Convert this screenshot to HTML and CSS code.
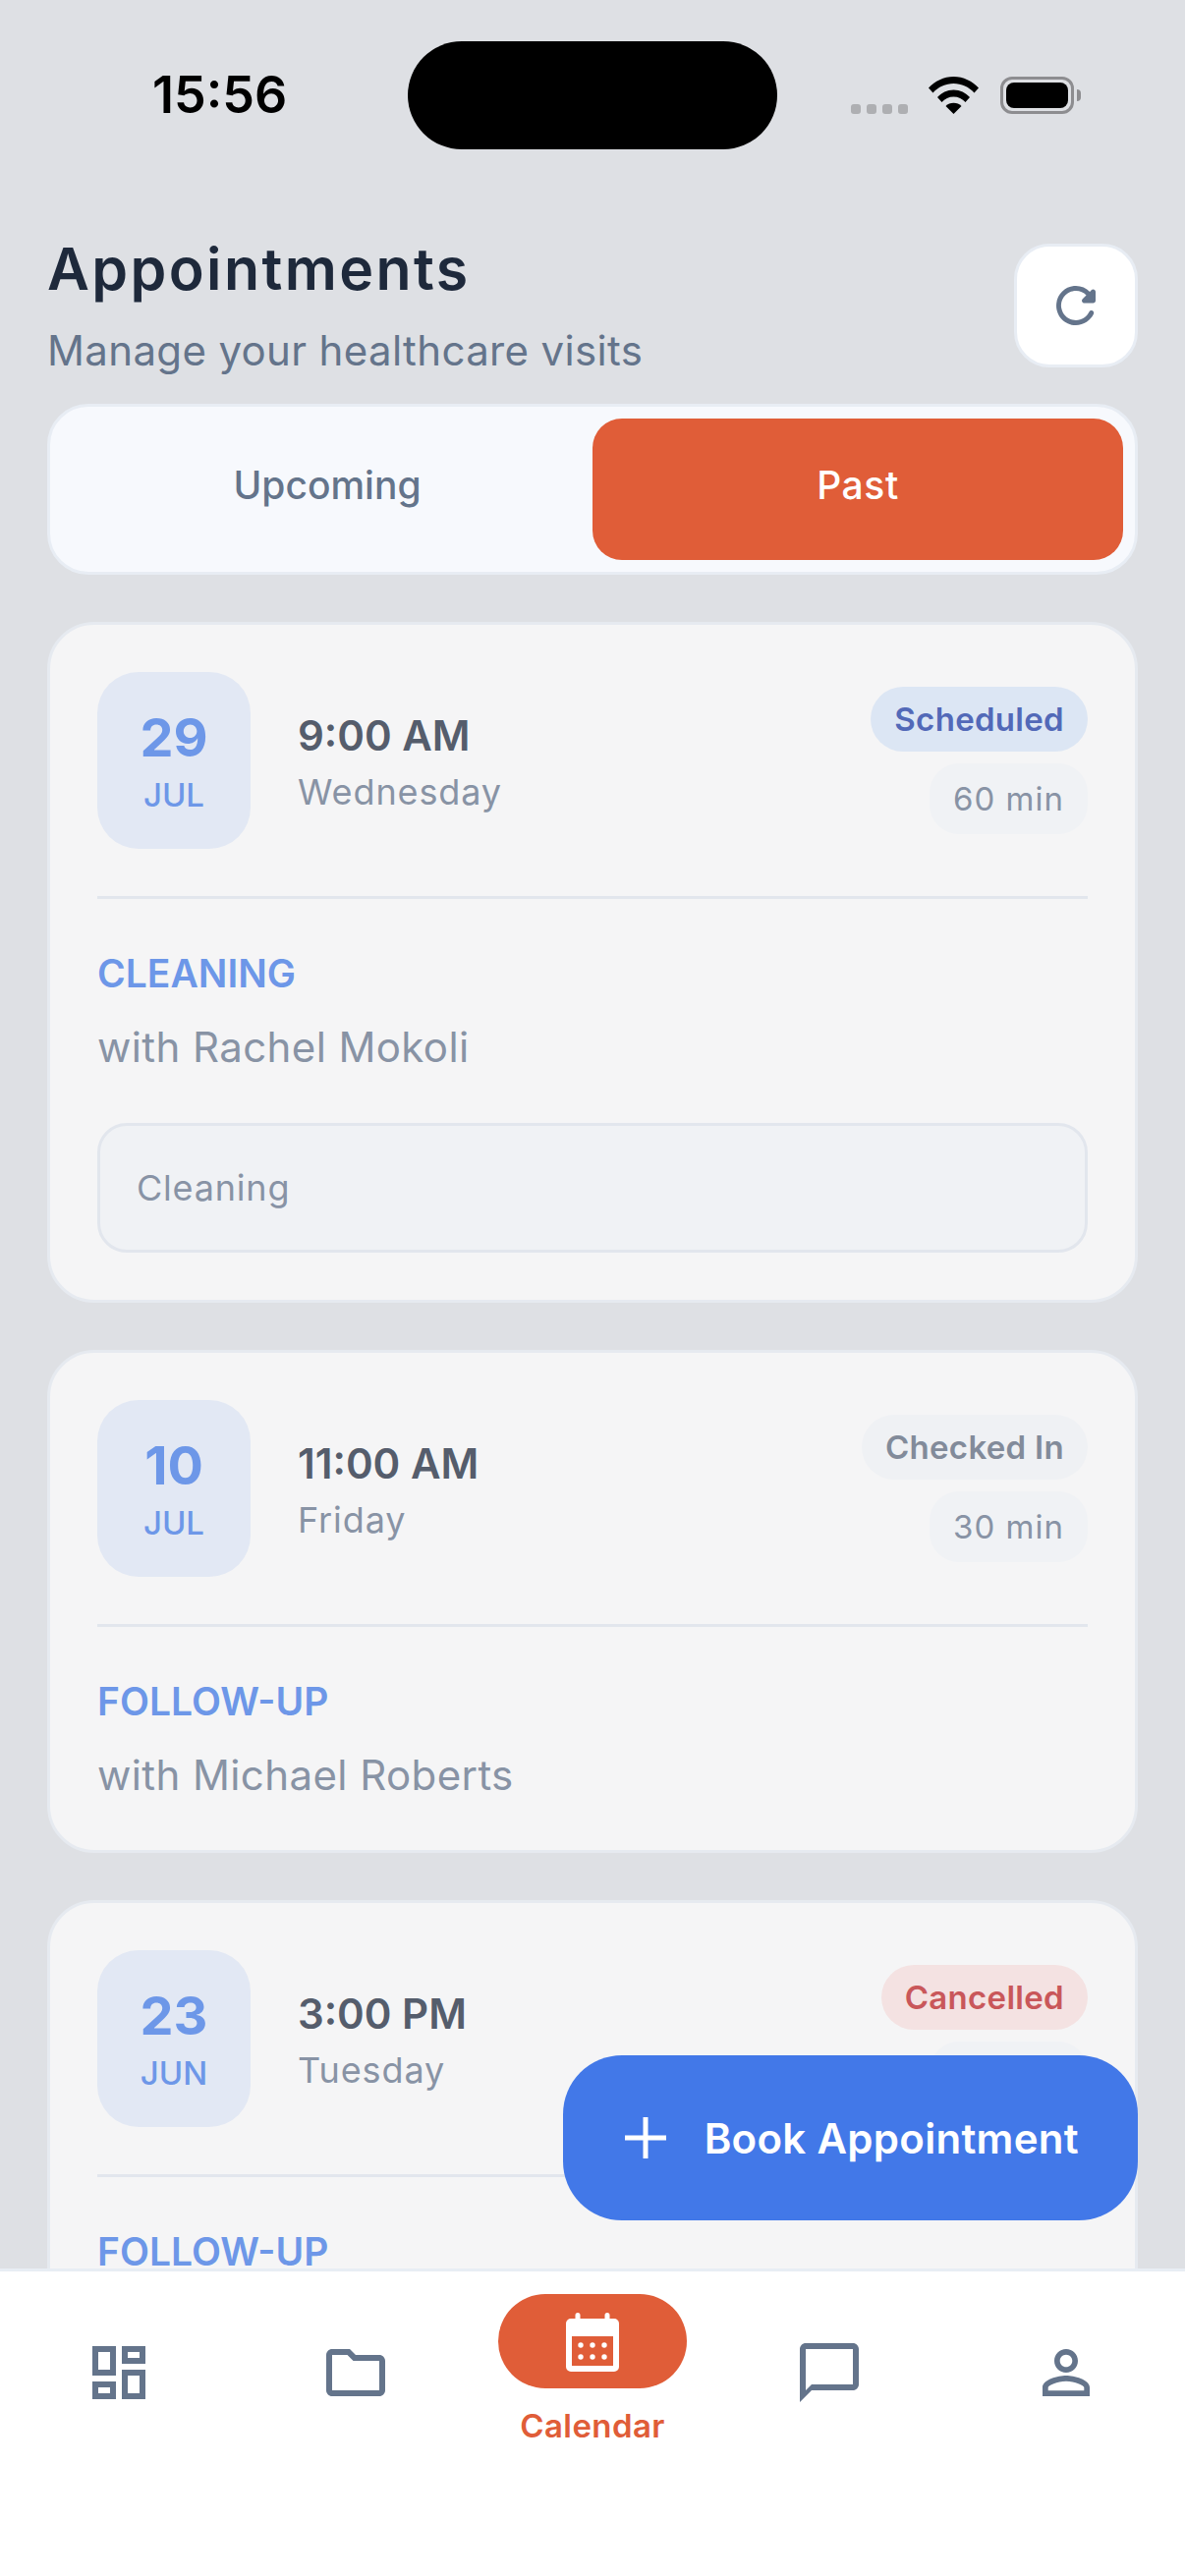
FILE: index.html
```html
<!DOCTYPE html>
<html lang="en">
<head>
<meta charset="utf-8">
<title>Appointments</title>
<link rel="stylesheet" href="styles.css">
</head>
<body>
<div class="phone">
  <div class="status-bar">
    <span class="time">15:56</span>
    <div class="island"></div>
    <div class="status-icons">
      <div class="signal"><i></i><i></i><i></i><i></i></div>
      <svg class="wifi" width="51" height="38" viewBox="0 0 51 38"><path d="M0 11.5C6.5 4.5 15.5 0 25.5 0S44.500 4.500 51 11.500L46.500 16.500C41 10.500 33.500 7 25.500 7S10 10.500 4.500 16.500Z"/><path d="M9 21C13 16.500 19 13.500 25.500 13.500S38 16.500 42 21L37.500 26C34.500 22.500 30.200 20.500 25.500 20.500S16.500 22.500 13.500 26Z"/><path d="M17.500 30C19.500 28 22.300 26.800 25.500 26.800S31.500 28 33.500 30L25.500 38Z"/></svg>
      <div class="battery"><div class="battery-fill"></div><div class="battery-cap"></div></div>
    </div>
  </div>

  <header class="page-header">
    <div class="heading">
      <h1 class="title">Appointments</h1>
      <p class="subtitle">Manage your healthcare visits</p>
    </div>
    <button class="refresh" type="button" aria-label="Refresh">
      <svg width="60" height="60" viewBox="0 0 24 24"><path fill="#64748b" d="M17.65 6.35c-1.63-1.63-3.94-2.57-6.48-2.31-3.67.37-6.69 3.35-7.1 7.02C3.52 15.91 7.27 20 12 20c3.19 0 5.93-1.87 7.21-4.56.32-.67-.16-1.44-.9-1.44-.37 0-.72.2-.88.53-1.130 2.430-3.840 3.970-6.800 3.310-2.220-.49-4.010-2.300-4.480-4.520C5.310 9.440 8.260 6 12 6c1.660 0 3.140.69 4.220 1.780l-1.510 1.510c-.63.63-.19 1.710.7 1.710H19c.55 0 1-.45 1-1V6.410c0-.89-1.080-1.340-1.710-.71l-.64.65z"/></svg>
    </button>
  </header>

  <div class="tabs">
    <div class="tab">Upcoming</div>
    <div class="tab tab-active">Past</div>
  </div>

  <main class="list">
    <article class="card">
      <div class="card-top">
        <div class="date"><span class="day">29</span><span class="month">JUL</span></div>
        <div class="when"><span class="hour">9:00 AM</span><span class="weekday">Wednesday</span></div>
        <div class="meta"><span class="badge badge-scheduled">Scheduled</span><span class="duration">60 min</span></div>
      </div>
      <div class="card-body">
        <div class="kind">CLEANING</div>
        <div class="provider">with Rachel Mokoli</div>
        <div class="note">Cleaning</div>
      </div>
    </article>

    <article class="card">
      <div class="card-top">
        <div class="date"><span class="day">10</span><span class="month">JUL</span></div>
        <div class="when"><span class="hour">11:00 AM</span><span class="weekday">Friday</span></div>
        <div class="meta"><span class="badge badge-checked">Checked In</span><span class="duration">30 min</span></div>
      </div>
      <div class="card-body">
        <div class="kind">FOLLOW-UP</div>
        <div class="provider">with Michael Roberts</div>
      </div>
    </article>

    <article class="card">
      <div class="card-top">
        <div class="date"><span class="day">23</span><span class="month">JUN</span></div>
        <div class="when"><span class="hour">3:00 PM</span><span class="weekday">Tuesday</span></div>
        <div class="meta"><span class="badge badge-cancelled">Cancelled</span><span class="duration">45 min</span></div>
      </div>
      <div class="card-body">
        <div class="kind">FOLLOW-UP</div>
      </div>
    </article>
  </main>

  <button class="fab" type="button">
    <svg width="48" height="48" viewBox="0 0 48 48"><path d="M24 3V45M3 24H45" stroke="#fff" stroke-width="5" fill="none"/></svg>
    <span>Book Appointment</span>
  </button>

  <nav class="nav">
    <div class="nav-item">
      <svg width="72" height="72" viewBox="0 0 24 24"><path fill="#64748b" d="M19 5v2h-4V5h4M9 5v6H5V5h4m10 8v6h-4v-6h4M9 17v2H5v-2h4M21 3h-8v6h8V3zM11 3H3v10h8V3zm10 8h-8v10h8V11zm-10 4H3v6h8v-6z"/></svg>
    </div>
    <div class="nav-item">
      <svg width="72" height="72" viewBox="0 0 24 24"><path fill="#64748b" d="M9.170 6l2 2H20v10H4V6h5.170M10 4H4c-1.100 0-1.990.9-1.990 2L2 18c0 1.100.9 2 2 2h16c1.100 0 2-.9 2-2V8c0-1.100-.9-2-2-2h-8l-2-2z"/></svg>
    </div>
    <div class="nav-item nav-item-active">
      <div class="nav-pill">
        <svg width="72" height="72" viewBox="0 0 72 72"><path fill="#fff" fill-rule="evenodd" d="M18.500 9.500a2.500 2.500 0 0 1 5 0V13h25V9.500a2.500 2.500 0 0 1 5 0V13H58a5 5 0 0 1 5 5v44a5 5 0 0 1-5 5H14a5 5 0 0 1-5-5V18a5 5 0 0 1 5-5h4.500ZM15 31V61H57V31Z"/><g fill="#fff"><circle cx="24" cy="40" r="2.700"/><circle cx="36" cy="40" r="2.700"/><circle cx="48" cy="40" r="2.700"/><circle cx="24" cy="52" r="2.700"/><circle cx="36" cy="52" r="2.700"/><circle cx="48" cy="52" r="2.700"/></g></svg>
      </div>
      <span class="nav-label">Calendar</span>
    </div>
    <div class="nav-item">
      <svg width="72" height="72" viewBox="0 0 24 24"><path fill="#64748b" d="M20 2H4c-1.100 0-2 .9-2 2v18l4-4h14c1.100 0 2-.9 2-2V4c0-1.100-.9-2-2-2zm0 14H6l-2 2V4h16v12z"/></svg>
    </div>
    <div class="nav-item">
      <svg width="72" height="72" viewBox="0 0 24 24"><path fill="#64748b" d="M12 5.900c1.160 0 2.100.94 2.100 2.100s-.94 2.100-2.100 2.100S9.900 9.160 9.900 8s.94-2.100 2.100-2.100m0 9c2.970 0 6.100 1.460 6.100 2.100v1.100H5.900V17c0-.64 3.130-2.100 6.100-2.100M12 4C9.790 4 8 5.790 8 8s1.790 4 4 4 4-1.790 4-4-1.790-4-4-4zm0 9c-2.670 0-8 1.340-8 4v3h16v-3c0-2.660-5.330-4-8-4z"/></svg>
    </div>
  </nav>
</div>
</body>
</html>
```

FILE: styles.css
```css
* { box-sizing: border-box; }
html, body { margin: 0; padding: 0; }
body { font-family: "Inter", "Liberation Sans", sans-serif; }

.phone {
  position: relative;
  width: 1206px;
  height: 2622px;
  background: #dee0e4;
  display: flex;
  flex-direction: column;
  overflow: hidden;
}

/* Status bar */
.status-bar {
  flex: none;
  height: 238px;
  display: flex;
  align-items: flex-start;
  padding: 42px 113px 0 155px;
}
.time {
  width: 260px;
  font-size: 52px;
  line-height: 110px;
  font-weight: 600;
  color: #000;
}
.island {
  width: 376px;
  height: 110px;
  border-radius: 55px;
  background: #000;
}
.status-icons {
  flex: 1;
  display: flex;
  align-items: flex-start;
  justify-content: flex-end;
  padding-top: 36px;
  position: relative;
}
.signal {
  display: flex;
  gap: 6px;
  margin-top: 28px;
  margin-right: 21px;
}
.signal i {
  width: 10px;
  height: 10px;
  border-radius: 3px;
  background: #aeafb2;
}
.wifi { margin-right: 22px; }
.battery {
  position: relative;
  width: 75px;
  height: 38px;
  border: 3px solid #8d8d90;
  border-radius: 12px;
  padding: 3px;
}
.battery-fill {
  width: 100%;
  height: 100%;
  border-radius: 8px;
  background: #000;
}
.battery-cap {
  position: absolute;
  right: -10px;
  top: 10px;
  width: 4px;
  height: 12px;
  background: #8d8d90;
  border-radius: 0 6px 6px 0;
}

/* Header */
.page-header {
  flex: none;
  display: flex;
  align-items: center;
  justify-content: space-between;
  padding: 0 48px;
  height: 146px;
}
.heading { padding-top: 3px; }
.title {
  margin: -3px 0 0;
  font-size: 59px;
  line-height: 68px;
  font-weight: 600;
  color: #1e293b;
  letter-spacing: 2.4px;
}
.subtitle {
  margin: 23px 0 0;
  font-size: 42px;
  line-height: 52px;
  font-weight: 400;
  color: #64748b;
  letter-spacing: 0.35px;
}
.refresh {
  width: 126px;
  height: 126px;
  padding: 0;
  border: 3px solid #e8edf4;
  border-radius: 36px;
  background: #fff;
  display: flex;
  align-items: center;
  justify-content: center;
}

/* Tabs */
.tabs {
  flex: none;
  margin: 27px 48px 0;
  height: 174px;
  padding: 12px;
  background: #f7f9fd;
  border: 3px solid #e8edf4;
  border-radius: 42px;
  display: flex;
}
.tab {
  flex: 1;
  display: flex;
  align-items: center;
  justify-content: center;
  padding-bottom: 10px;
  border-radius: 30px;
  font-size: 39px;
  font-weight: 500;
  color: #64748b;
}
.tab-active {
  background: #e05d38;
  color: #fff;
  letter-spacing: 0.6px;
}

/* List */
.list {
  flex: 1;
  min-height: 0;
  overflow: hidden;
  padding: 48px 48px 0;
  display: flex;
  flex-direction: column;
  gap: 48px;
}
.card {
  flex: none;
  background: #f5f5f6;
  border: 3px solid #e6eaf0;
  border-radius: 48px;
  padding: 48px;
}
.card-top {
  display: flex;
  align-items: center;
  padding-bottom: 48px;
  border-bottom: 3px solid #e2e6ed;
}
.date {
  flex: none;
  width: 156px;
  height: 180px;
  border-radius: 42px;
  background: #e2e8f4;
  display: flex;
  flex-direction: column;
  align-items: center;
  justify-content: center;
  gap: 5px;
}
.day {
  font-size: 54px;
  line-height: 64px;
  font-weight: 700;
  color: #6d97e8;
}
.month {
  font-size: 33px;
  line-height: 42px;
  font-weight: 500;
  color: #6d97e8;
}
.when {
  flex: 1;
  margin-left: 48px;
  padding-top: 3px;
  display: flex;
  flex-direction: column;
  gap: 8px;
}
.hour {
  font-size: 42px;
  line-height: 52px;
  font-weight: 600;
  color: #555d6c;
}
.weekday {
  font-size: 36px;
  line-height: 46px;
  color: #8893a5;
  letter-spacing: 0.9px;
}
.meta {
  flex: none;
  display: flex;
  flex-direction: column;
  align-items: flex-end;
  gap: 12px;
}
.badge {
  height: 66px;
  padding: 0 24px;
  border-radius: 33px;
  display: flex;
  align-items: center;
  font-size: 33px;
  font-weight: 600;
  letter-spacing: 0.3px;
}
.badge-scheduled { background: #dce6f4; color: #5269b8; }
.badge-checked { background: #eff1f4; color: #828b9a; }
.badge-cancelled { background: #f4e2e2; color: #c9575a; }
.duration {
  height: 72px;
  padding: 0 24px;
  border-radius: 30px;
  background: #f0f2f5;
  display: flex;
  align-items: center;
  font-size: 33px;
  color: #8893a5;
  letter-spacing: 1px;
}
.card-body { padding-top: 52px; }
.kind {
  font-size: 39px;
  line-height: 48px;
  font-weight: 600;
  color: #6d97e8;
}
.provider {
  margin-top: 23px;
  font-size: 42px;
  line-height: 56px;
  color: #8893a5;
  letter-spacing: 0.4px;
}
.note {
  margin-top: 49px;
  height: 132px;
  padding: 0 37px;
  border: 3px solid #e2e6ed;
  border-radius: 30px;
  background: #f0f2f5;
  display: flex;
  align-items: center;
  font-size: 36px;
  color: #8893a5;
  letter-spacing: 0.8px;
}

/* Floating button */
.fab {
  position: absolute;
  right: 48px;
  top: 2092px;
  height: 168px;
  padding: 0 60px;
  border: 0;
  border-radius: 60px;
  background: #4278e8;
  color: #fff;
  font-family: inherit;
  font-size: 42px;
  font-weight: 600;
  letter-spacing: 0.3px;
  display: flex;
  align-items: center;
  gap: 36px;
}

/* Bottom nav */
.nav {
  flex: none;
  height: 313px;
  background: #fff;
  border-top: 3px solid #e8edf4;
  display: flex;
  padding-top: 23px;
}
.nav-item {
  flex: 1;
  display: flex;
  flex-direction: column;
  align-items: center;
  padding-top: 44px;
}
.nav-item svg { display: block; }
.nav-item-active { padding-top: 0; }
.nav-pill {
  width: 192px;
  height: 96px;
  border-radius: 48px;
  background: #e05d38;
  display: flex;
  align-items: center;
  justify-content: center;
}
.nav-label {
  margin-top: 18px;
  font-size: 33px;
  line-height: 40px;
  font-weight: 600;
  color: #e05d38;
  letter-spacing: 0.4px;
}
```
